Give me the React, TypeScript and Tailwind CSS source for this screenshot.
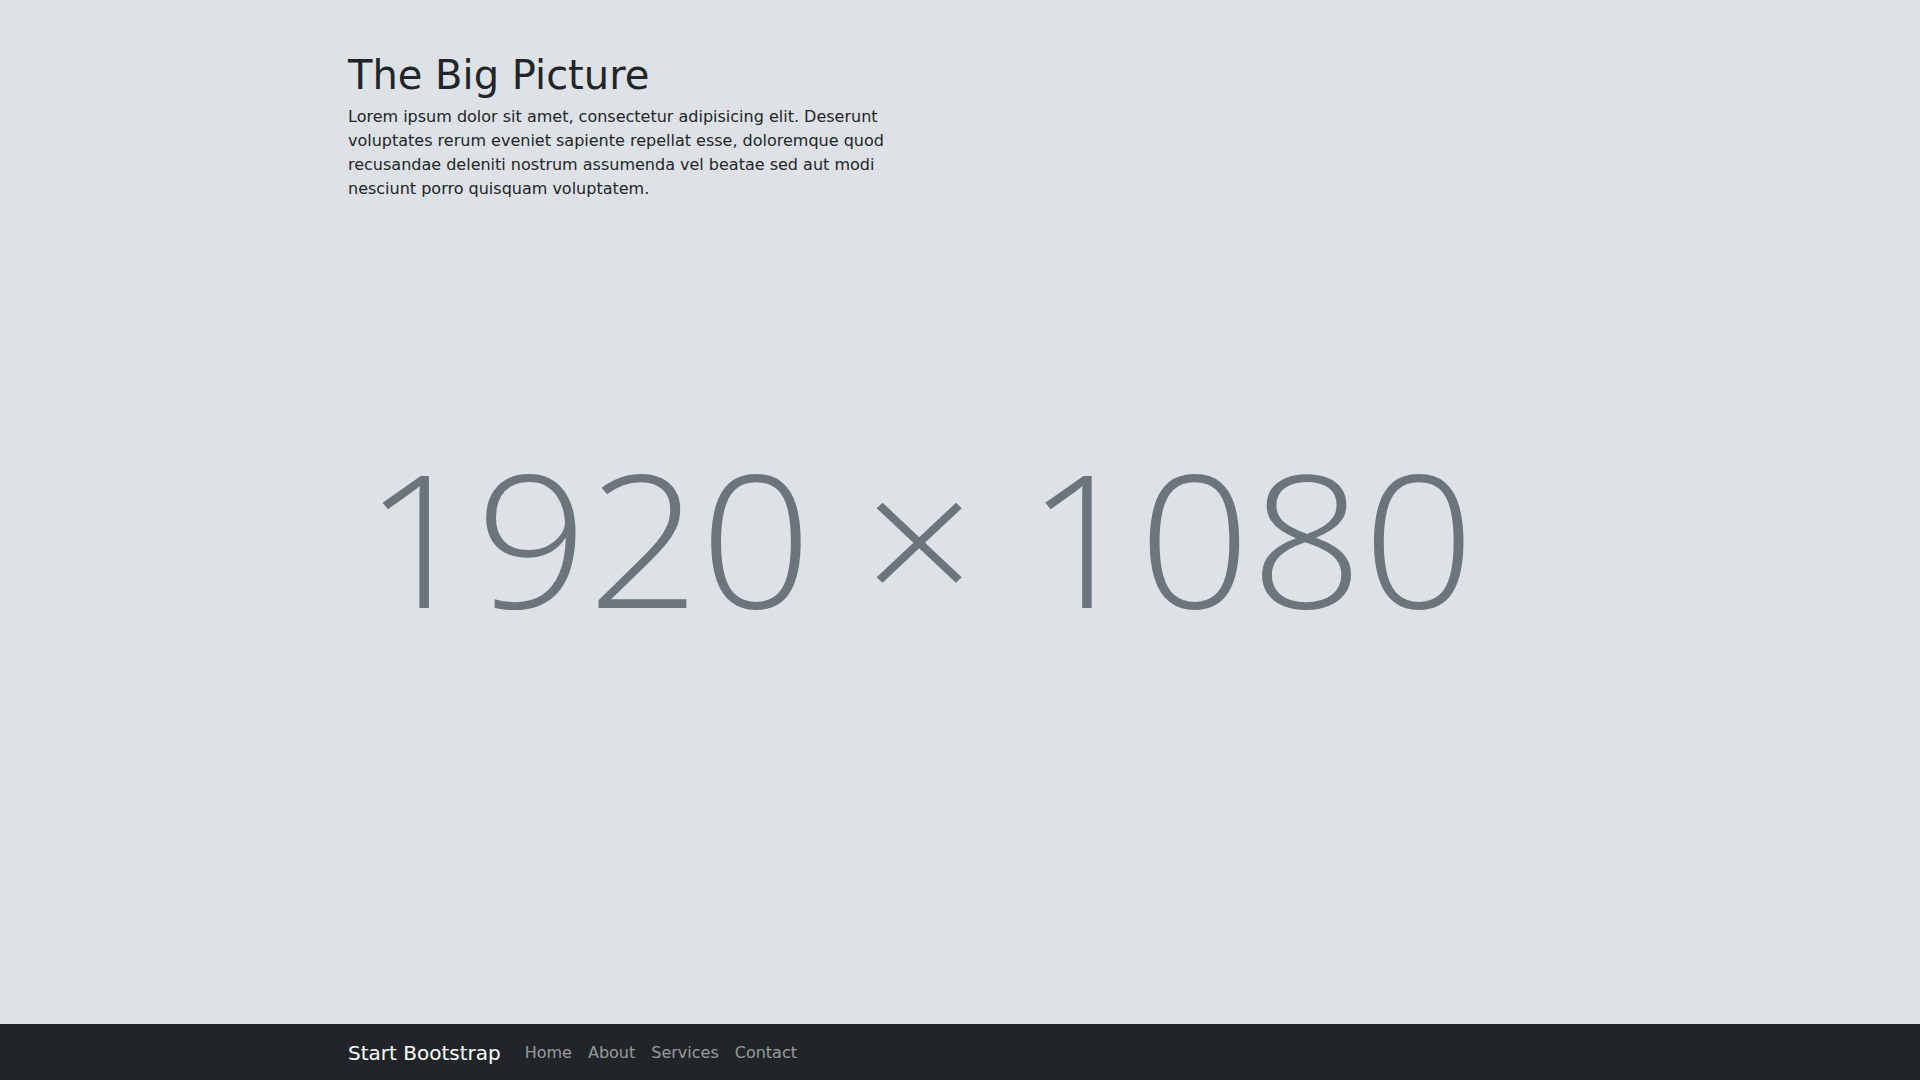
import React from "react";

export default function App() {
  return (
    <div
      className="relative flex min-h-screen flex-col bg-[#dee2e6] text-[#212529]"
      style={{ fontFamily: '"DejaVu Sans", sans-serif' }}
    >
      <div className="pointer-events-none absolute inset-0 flex items-center justify-center pb-[8px] pr-[82px]">
        <span
          className="scale-x-[1.062] whitespace-pre text-[185px] font-light leading-none text-[#6c757d]"
          style={{ fontFamily: '"Open Sans", sans-serif' }}
        >
          1920 × 1080
        </span>
      </div>

      <section className="relative flex-1 pt-[51px]">
        <div className="mx-auto w-[1320px] px-12">
          <div className="w-[570px]">
            <h1 className="mb-[6px] text-[40px] font-normal leading-[1.2]">The Big Picture</h1>
            <p className="text-base leading-6">
              Lorem ipsum dolor sit amet, consectetur adipisicing elit. Deserunt voluptates rerum
              eveniet sapiente repellat esse, doloremque quod recusandae deleniti nostrum assumenda
              vel beatae sed aut modi nesciunt porro quisquam voluptatem.
            </p>
          </div>
        </div>
      </section>

      <nav className="relative h-14 bg-[#212529]">
        <div className="mx-auto flex h-full w-[1320px] items-center px-12 pt-[1px]">
          <a className="mr-4 py-[5px] text-xl leading-[30px] text-white">Start Bootstrap</a>
          <ul className="flex">
            {["Home", "About", "Services", "Contact"].map((l) => (
              <li key={l}>
                <a className="block px-2 py-2 text-base leading-6 text-[rgba(255,255,255,0.55)]">{l}</a>
              </li>
            ))}
          </ul>
        </div>
      </nav>
    </div>
  );
}
